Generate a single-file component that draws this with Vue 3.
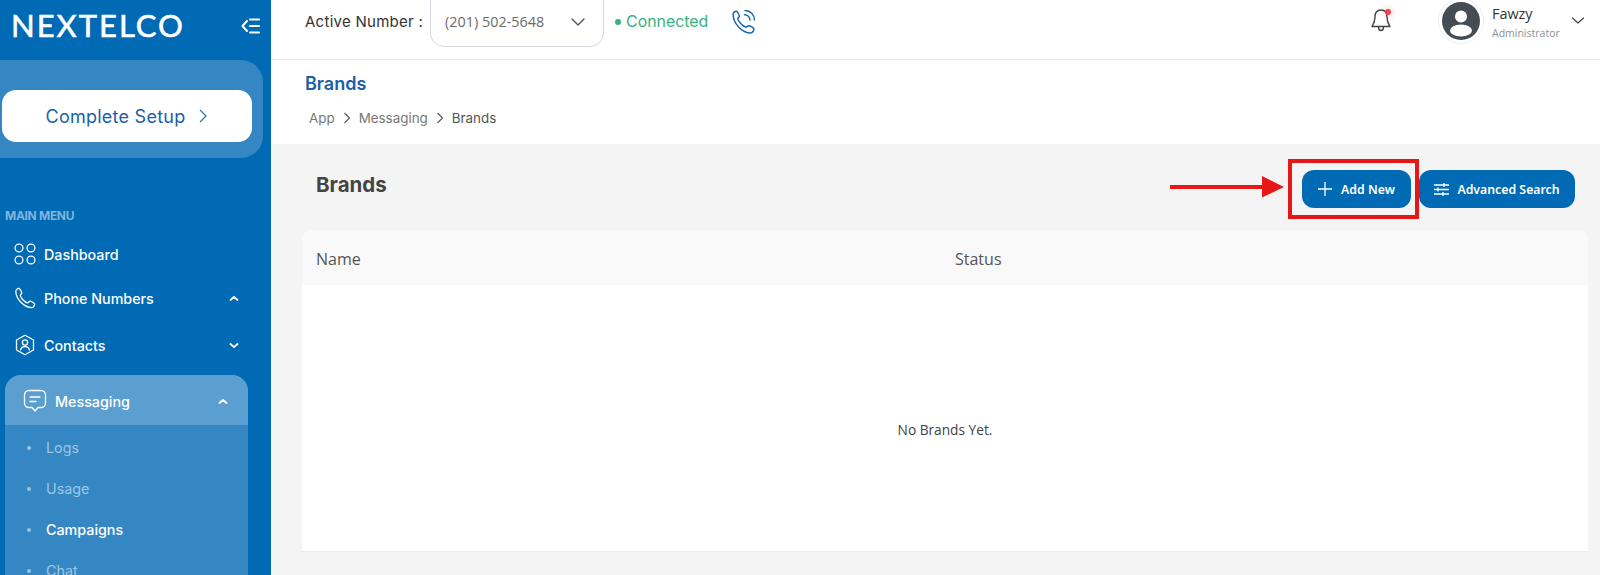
<script setup>
const subItems = [
  { label: 'Logs', active: false },
  { label: 'Usage', active: false },
  { label: 'Campaigns', active: true },
  { label: 'Chat', active: false },
]
</script>

<template>
  <div class="page">
    <aside class="sidebar">
      <div class="brand-row">
        <span class="logo">NEXTELCO</span>
        <svg class="collapse" width="20" height="18" viewBox="0 0 20 18" fill="none" stroke="#fff" stroke-width="2" stroke-linecap="round" stroke-linejoin="round">
          <path d="M6 4 1.500 9 6 14M9 2.500h9M9 9h9M9 15.500h9" />
        </svg>
      </div>
      <div class="setup-card">
        <div class="setup-btn">
          <span>Complete Setup</span>
          <svg width="10" height="16" viewBox="0 0 10 16" fill="none" stroke="#1f7cc0" stroke-width="1.300"><path d="M2 2l6 6-6 6" /></svg>
        </div>
      </div>
      <div class="menu-title">MAIN MENU</div>
      <nav class="menu">
        <div class="item item-dash">
          <svg width="22" height="22" viewBox="0 0 22 22" fill="none" stroke="#fff" stroke-width="1.300"><circle cx="5" cy="5" r="3.900" /><circle cx="17" cy="5" r="3.900" /><circle cx="5" cy="17" r="3.900" /><circle cx="17" cy="17" r="3.900" /></svg>
          <span>Dashboard</span>
        </div>
        <div class="item item-phone">
          <svg width="22" height="22" viewBox="0 0 24 24" fill="none" stroke="#fff" stroke-width="1.400" stroke-linejoin="round"><path d="M2 4.500C2 3 4 1.300 5.500 1.500 6.500 1.700 8.500 5.300 8.500 6.500 8.500 7.700 6.500 8.200 6.800 9.500 7.300 12 12 16.700 14.500 17.200 15.800 17.500 16.300 15.500 17.500 15.500 18.700 15.500 22.300 17.500 22.500 18.500 22.700 20 21 22.500 19.500 22.500 11 22.500 2 13 2 4.500Z" /></svg>
          <span>Phone Numbers</span>
          <svg class="chev" width="10" height="7" viewBox="0 0 10 7" fill="none" stroke="#fff" stroke-width="1.800" stroke-linecap="round" stroke-linejoin="round"><path d="M1.500 5 5 1.800 8.500 5" /></svg>
        </div>
        <div class="item item-contacts">
          <svg width="22" height="22" viewBox="0 0 22 22" fill="none" stroke="#fff" stroke-width="1.300" stroke-linejoin="round"><path d="M11 1.200 19.500 6v10L11 20.800 2.500 16V6Z" /><circle cx="11" cy="8.500" r="2.600" /><path d="M6.500 16.500c.5-3 2.300-4 4.500-4s4 1 4.500 4" /></svg>
          <span>Contacts</span>
          <svg class="chev" width="10" height="7" viewBox="0 0 10 7" fill="none" stroke="#fff" stroke-width="1.800" stroke-linecap="round" stroke-linejoin="round"><path d="M1.500 2 5 5.200 8.500 2" /></svg>
        </div>
        <div class="group">
          <div class="group-head">
            <svg width="24" height="24" viewBox="0 0 24 24" fill="none" stroke="#fff" stroke-width="1.300" stroke-linecap="round" stroke-linejoin="round"><path d="M6 1.500h12c2.500 0 4.500 2 4.500 4.500v8c0 2.500-2 4.500-4.500 4.500h-3L12 22l-3-3.500H6c-2.500 0-4.500-2-4.500-4.500V6C1.500 3.500 3.500 1.500 6 1.500Z" /><path d="M7 8h10M7 12.500h6" /></svg>
            <span>Messaging</span>
            <svg class="chev" width="10" height="7" viewBox="0 0 10 7" fill="none" stroke="#fff" stroke-width="1.800" stroke-linecap="round" stroke-linejoin="round"><path d="M1.500 5 5 1.800 8.500 5" /></svg>
          </div>
          <ul class="sub">
            <li v-for="s in subItems" :key="s.label" :class="{ active: s.active }">{{ s.label }}</li>
          </ul>
        </div>
      </nav>
    </aside>

    <main class="main">
      <header class="topbar">
        <span class="active-label">Active Number :</span>
        <div class="number-select">
          <span>(201) 502-5648</span>
          <svg width="16" height="10" viewBox="0 0 16 10" fill="none" stroke="#555" stroke-width="1.400" stroke-linecap="round" stroke-linejoin="round"><path d="M2 2l6 6 6-6" /></svg>
        </div>
        <div class="status"><i class="dot"></i><span>Connected</span></div>
        <svg class="call" width="25" height="25" viewBox="0 0 24 24" fill="none" stroke="#1666ad" stroke-width="1.400" stroke-linejoin="round" stroke-linecap="round"><path d="M2 5C2 3.500 3.800 2 5.200 2.200 6.200 2.400 8 6 8 7 8 8.200 6.300 8.500 6.500 9.800 7 12 11.500 16.700 14 17.300 15.300 17.600 15.800 16 17 16 18.200 16 21.800 18 22 19 22.200 20.500 20.500 23 19 23 10.500 23 2 13.500 2 5Z" /><path d="M13 5.500c2.800 0 5.200 2.200 5.200 5M13.500 1.500c5 0 9 4 9 9" /></svg>
        <div class="spacer"></div>
        <div class="bell-wrap">
          <svg width="22" height="26" viewBox="0 0 22 26" fill="none" stroke="#444" stroke-width="1.400" stroke-linejoin="round"><path d="M11 3c-4 0-6 3-6 7 0 5-1.500 7-3 9.500h18c-1.500-2.500-3-4.500-3-9.500 0-4-2-7-6-7Z" /><path d="M8.500 20c0 2 1 3.500 2.500 3.500s2.500-1.500 2.500-3.500" /></svg>
          <i class="bell-dot"></i>
        </div>
        <div class="avatar">
          <svg width="38" height="38" viewBox="0 0 38 38"><circle cx="19" cy="19" r="19" fill="#454c54" /><circle cx="19" cy="14.500" r="6" fill="#fff" /><ellipse cx="19" cy="28.500" rx="11" ry="6" fill="#fff" /></svg>
        </div>
        <div class="user">
          <div class="user-name">Fawzy</div>
          <div class="user-role">Administrator</div>
        </div>
        <svg class="user-chev" width="14" height="9" viewBox="0 0 14 9" fill="none" stroke="#444" stroke-width="1.200" stroke-linecap="round" stroke-linejoin="round"><path d="M1.500 2 7 7l5.500-5" /></svg>
      </header>

      <section class="page-head">
        <h1>Brands</h1>
        <div class="crumbs">
          <span>App</span>
          <svg width="8" height="12" viewBox="0 0 8 12" fill="none" stroke="#555" stroke-width="1.100"><path d="M1.500 1l5 5-5 5" /></svg>
          <span>Messaging</span>
          <svg width="8" height="12" viewBox="0 0 8 12" fill="none" stroke="#555" stroke-width="1.100"><path d="M1.500 1l5 5-5 5" /></svg>
          <span class="crumb-last">Brands</span>
        </div>
      </section>

      <section class="content">
        <div class="toolbar">
          <h2>Brands</h2>
          <div class="actions">
            <button class="btn btn-add" type="button">
              <svg width="14" height="14" viewBox="0 0 14 14" stroke="#fff" stroke-width="1.300"><path d="M7 0v14M0 7h14" /></svg>
              Add New
            </button>
            <button class="btn" type="button">
              <svg width="15" height="13" viewBox="0 0 15 13" fill="none" stroke="#fff" stroke-width="1.300"><path d="M0 2h15M0 6.500h15M0 11h15M10 0v4M4 4.500v4M9 9v4" /></svg>
              Advanced Search
            </button>
            <div class="highlight"></div>
            <svg class="arrow" width="114" height="22" viewBox="0 0 114 22"><path d="M0 9h92V0l22 11-22 10.500V13H0Z" fill="#e81717" /></svg>
          </div>
        </div>
        <div class="table">
          <div class="thead">
            <span class="col-name">Name</span>
            <span>Status</span>
          </div>
          <div class="tbody">No Brands Yet.</div>
        </div>
      </section>
    </main>
  </div>
</template>

<style>
html, body { margin: 0; overflow: hidden; }
</style>

<style scoped>
.page {
  display: flex;
  width: 1600px;
  height: 575px;
  overflow: hidden;
  background: #f4f4f4;
  font-family: Inter, "Open Sans", sans-serif;
}
.sidebar {
  width: 271px;
  flex: none;
  background: #016ab5;
  color: #fff;
  overflow: hidden;
}
.brand-row {
  height: 60px;
  display: flex;
  align-items: center;
  justify-content: space-between;
  padding: 0 10px 9px 11px;
  box-sizing: border-box;
}
.logo {
  font-family: Lato, sans-serif;
  font-size: 31px;
  line-height: 1;
  letter-spacing: 2px;
  font-weight: 400;
  -webkit-text-stroke: .6px #fff;
}
.setup-card {
  height: 98px;
  width: 264px;
  margin-left: -1px;
  background: #3587c3;
  border-radius: 0 22px 22px 0;
  display: flex;
  align-items: flex-start;
  padding: 30px 0 0 3px;
  box-sizing: border-box;
}
.setup-btn {
  width: 250px;
  height: 52px;
  background: #fff;
  border-radius: 14px;
  display: flex;
  align-items: center;
  justify-content: center;
  gap: 13px;
  color: #1a5fab;
  font-size: 18px;
  letter-spacing: .25px;
  font-weight: 400;
}
.menu-title {
  margin: 50px 0 0 5px;
  font-size: 12px;
  line-height: 15px;
  font-weight: 700;
  letter-spacing: -.3px;
  color: #7fb4da;
}
.menu { margin-top: 20px; }
.item {
  display: flex;
  align-items: center;
  gap: 8px;
  padding: 0 32px 0 14px;
  font-size: 14.300px;
  font-weight: 500;
  height: 22px;
}
.item-phone { margin-top: 22px; }
.item-contacts { margin-top: 25px; }
.chev { margin-left: auto; flex: none; }
.group {
  margin: 19px 0 0 5px;
  width: 243px;
  background: #3587c3;
  border-radius: 16px 16px 0 0;
  overflow: hidden;
}
.group-head {
  height: 50px;
  box-sizing: border-box;
  background: #5a9fcf;
  display: flex;
  align-items: center;
  gap: 8px;
  padding: 2px 20px 0 18px;
  font-size: 14.300px;
  font-weight: 500;
}
.sub {
  list-style: none;
  margin: 0;
  padding: 2px 0 0 22px;
  font-size: 14.300px;
  color: #9cc5e3;
}
.sub li {
  height: 41px;
  line-height: 41px;
  display: flex;
  align-items: center;
  gap: 15px;
}
.sub li::before {
  content: "";
  width: 4px;
  height: 4px;
  border-radius: 50%;
  background: #9cc5e3;
}
.sub li.active { color: #fff; font-weight: 500; }

.main {
  flex: 1;
  min-width: 0;
  display: flex;
  flex-direction: column;
}
.topbar {
  height: 60px;
  flex: none;
  box-sizing: border-box;
  background: #fff;
  border-bottom: 1px solid #e6e6e6;
  display: flex;
  align-items: flex-start;
  padding: 0 15px 0 34px;
  font-size: 15px;
}
.active-label { margin-top: 13px; line-height: 17px; color: #333; letter-spacing: .27px; }
.number-select {
  margin: -12px 0 0 7px;
  width: 174px;
  height: 59px;
  box-sizing: border-box;
  border: 1px solid #d5d8de;
  border-radius: 14px;
  display: flex;
  align-items: flex-end;
  justify-content: space-between;
  padding: 0 17px 15px 14px;
  color: #6b6b6b;
  font-family: "Open Sans", sans-serif;
  font-size: 14.400px;
}
.number-select svg { margin-bottom: 4px; }
.status {
  margin: 13px 0 0 11px;
  display: flex;
  align-items: center;
  gap: 5px;
  line-height: 17px;
  color: #35b37e;
  font-size: 15.900px;
}
.dot { width: 6px; height: 6px; border-radius: 50%; background: #35b37e; }
.call { margin: 9px 0 0 23px; }
.spacer { flex: 1; }
.bell-wrap { position: relative; margin: 7px 0 0 0; width: 22px; height: 26px; }
.bell-dot {
  position: absolute;
  top: 2px;
  right: 1px;
  width: 6px;
  height: 6px;
  border-radius: 50%;
  background: #f2404f;
  box-shadow: 0 0 0 4px rgba(242, 64, 79, .08);
}
.avatar {
  margin: 2px 0 0 50px;
  width: 38px;
  height: 38px;
  border-radius: 50%;
  box-shadow: 0 0 0 3px #fff, 0 0 0 4px #e9f0f6;
  display: flex;
}
.user { margin: 5px 0 0 12px; width: 79px; font-family: "Open Sans", sans-serif; }
.user-name { font-size: 14.400px; line-height: 18px; color: #333; }
.user-role { font-size: 10.500px; line-height: 16px; color: #8b9198; margin-top: 2px; }
.user-chev { margin: 16px 0 0 0; }

.page-head {
  height: 84px;
  flex: none;
  box-sizing: border-box;
  background: #fff;
  padding: 14px 34px 0;
}
h1 {
  margin: 0;
  font-size: 18px;
  line-height: 20px;
  font-weight: 600;
  color: #1a5fab;
}
.crumbs {
  margin-top: 15px;
  padding-left: 4px;
  display: flex;
  align-items: center;
  gap: 8px;
  font-size: 13.400px;
  line-height: 18px;
  color: #777;
}
.crumb-last { color: #555; }
.content { flex: 1; padding: 26px 12px 0 31px; }
.toolbar {
  display: flex;
  align-items: flex-start;
  justify-content: space-between;
  height: 60px;
  padding-right: 13px;
}
h2 {
  margin: 3px 0 0 14px;
  font-size: 20.500px;
  line-height: 24px;
  font-weight: 700;
  color: #444;
}
.actions {
  position: relative;
  display: flex;
  gap: 8px;
}
.btn {
  height: 38px;
  border: 0;
  border-radius: 12px;
  background: #016ab5;
  color: #fff;
  font-family: "Noto Sans", sans-serif;
  font-size: 12.300px;
  font-weight: 600;
  display: flex;
  align-items: center;
  justify-content: center;
  gap: 8px;
  width: 156px;
  padding: 0;
}
.btn-add { width: 109px; gap: 9px; }
.highlight {
  position: absolute;
  left: -14px;
  top: -11px;
  width: 131px;
  height: 60px;
  box-sizing: border-box;
  border: 4px solid #e81717;
  pointer-events: none;
}
.arrow { position: absolute; left: -132px; top: 6px; }
.table {
  height: 322px;
  background: #fff;
  border-radius: 10px 10px 0 0;
  border-bottom: 1px solid #ececec;
  overflow: hidden;
  box-sizing: border-box;
}
.thead {
  height: 55px;
  background: #f9f9f9;
  display: flex;
  align-items: center;
  padding: 2px 15px 0 14px;
  box-sizing: border-box;
  font-family: "Open Sans", sans-serif;
  font-size: 16px;
  font-weight: 500;
  color: #555;
}
.col-name { width: 639px; }
.tbody {
  height: 266px;
  display: flex;
  align-items: center;
  justify-content: center;
  padding-top: 22px;
  box-sizing: border-box;
  font-family: "Open Sans", sans-serif;
  font-size: 13.700px;
  color: #444;
}
</style>
